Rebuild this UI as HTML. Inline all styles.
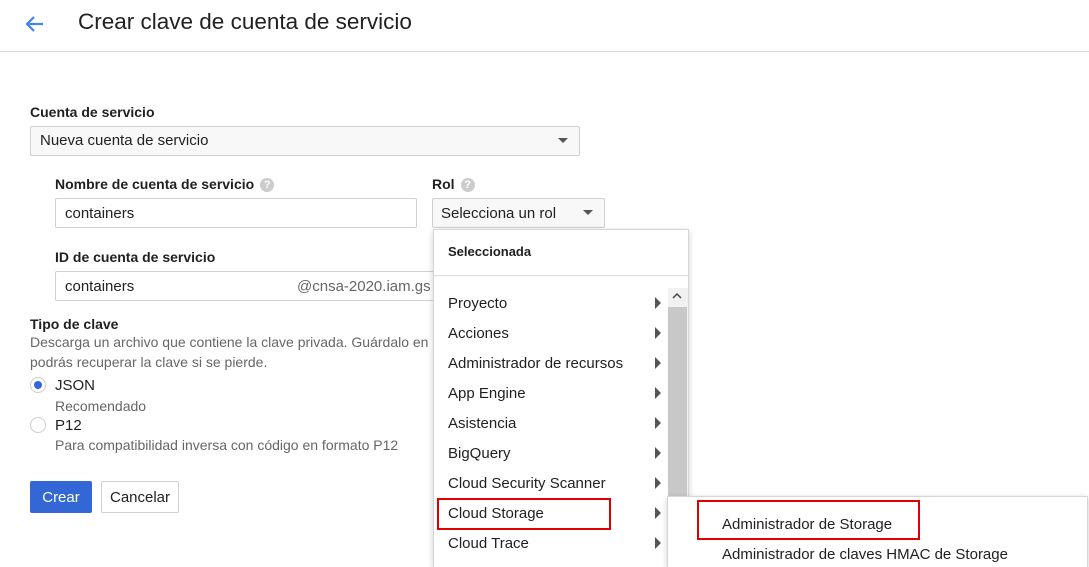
<!DOCTYPE html><html style="width:1089px;height:567px;overflow:hidden"><head><meta charset="utf-8"><style>
*{margin:0;padding:0;box-sizing:border-box}
body{width:1089px;height:567px;overflow:hidden;background:#fff;font-family:"Liberation Sans",Arial,sans-serif;color:#212121;position:relative}
.a{position:absolute;white-space:nowrap}
.lbl{font-size:14px;font-weight:bold;color:#212121}
.box{position:absolute;border:1px solid #d0d0d0;border-radius:2px;background:#fff}
.sel{background:#f8f8f8}
.tri{position:absolute;width:0;height:0;border-left:5px solid transparent;border-right:5px solid transparent;border-top:5px solid #555}
.q{display:inline-block;width:14px;height:14px;border-radius:50%;background:#ccc;color:#fff;font-size:11px;font-weight:bold;text-align:center;line-height:14px;vertical-align:1px;margin-left:6px}
.it{position:absolute;left:448px;font-size:15px;color:#212121}
.ar{position:absolute;left:655px;width:0;height:0;border-top:6px solid transparent;border-bottom:6px solid transparent;border-left:6px solid #555}
.g{color:#666;font-size:14px}
</style></head><body>
<svg class="a" style="left:23px;top:12px" width="24" height="24" viewBox="0 0 24 24"><path d="M20 12H5M11 5l-7 7 7 7" fill="none" stroke="#4285f4" stroke-width="2.2"/></svg>
<div class="a" style="left:78px;top:9px;font-size:22.5px;color:#212121">Crear clave de cuenta de servicio</div>
<div class="a" style="left:0;top:51px;width:1089px;height:1px;background:#dadada"></div>

<div class="a lbl" style="left:30px;top:104px">Cuenta de servicio</div>
<div class="box sel" style="left:30px;top:126px;width:550px;height:30px"></div>
<div class="a" style="left:40px;top:132px;font-size:15px">Nueva cuenta de servicio</div>
<div class="tri" style="left:558px;top:138px"></div>

<div class="a lbl" style="left:55px;top:176px">Nombre de cuenta de servicio<span class="q">?</span></div>
<div class="box" style="left:55px;top:198px;width:362px;height:30px"></div>
<div class="a" style="left:65px;top:205px;font-size:15px">containers</div>

<div class="a lbl" style="left:432px;top:176px">Rol<span class="q">?</span></div>
<div class="box sel" style="left:432px;top:198px;width:173px;height:30px"></div>
<div class="a" style="left:441px;top:205px;font-size:15px">Selecciona un rol</div>
<div class="tri" style="left:583px;top:210px"></div>

<div class="a lbl" style="left:55px;top:249px">ID de cuenta de servicio</div>
<div class="box" style="left:55px;top:271px;width:400px;height:30px"></div>
<div class="a" style="left:65px;top:278px;font-size:15px">containers</div>
<div class="a" style="left:297px;top:278px;font-size:15px;color:#666">@cnsa-2020.iam.gs</div>

<div class="a lbl" style="left:30px;top:316px">Tipo de clave</div>
<div class="a g" style="left:30px;top:334px">Descarga un archivo que contiene la clave privada. Guárdalo en un</div>
<div class="a g" style="left:30px;top:354px">podrás recuperar la clave si se pierde.</div>
<div class="a" style="left:30px;top:377px;width:16px;height:16px;border-radius:50%;border:1px solid #ccc;background:#fff"><div style="position:absolute;left:3px;top:3px;width:8px;height:8px;border-radius:50%;background:#3367d6"></div></div>
<div class="a" style="left:55px;top:377px;font-size:15px">JSON</div>
<div class="a g" style="left:55px;top:398px">Recomendado</div>
<div class="a" style="left:30px;top:417px;width:16px;height:16px;border-radius:50%;border:1px solid #ccc"></div>
<div class="a" style="left:55px;top:417px;font-size:15px">P12</div>
<div class="a g" style="left:55px;top:437px">Para compatibilidad inversa con código en formato P12</div>

<div class="a" style="left:30px;top:481px;width:62px;height:32px;background:#3367d6;border-radius:2px;color:#fff;font-size:15px;text-align:center;padding-top:8px">Crear</div>
<div class="a" style="left:101px;top:481px;width:78px;height:32px;border:1px solid #d0d0d0;border-radius:2px;font-size:15px;text-align:center;padding-top:7px">Cancelar</div>

<div class="a" style="left:433px;top:229px;width:256px;height:338px;background:#fff;border:1px solid #d6d6d6;border-bottom:none;box-shadow:0 2px 6px rgba(0,0,0,.2)"></div>
<div class="a" style="left:448px;top:244px;font-size:13px;font-weight:bold">Seleccionada</div>
<div class="a" style="left:434px;top:275px;width:254px;height:1px;background:#ddd"></div>
<div class="a" style="left:668px;top:288px;width:20px;height:279px;background:#f1f1f1"></div>
<div class="a" style="left:668px;top:307px;width:19px;height:190px;background:#c8c8c8"></div>
<svg class="a" style="left:671px;top:291px" width="12" height="10"><path d="M2 7l4-4 4 4" fill="none" stroke="#444" stroke-width="1.5"/></svg>
<div class="it" style="top:295px">Proyecto</div><div class="ar" style="top:297px"></div>
<div class="it" style="top:325px">Acciones</div><div class="ar" style="top:327px"></div>
<div class="it" style="top:355px">Administrador de recursos</div><div class="ar" style="top:357px"></div>
<div class="it" style="top:385px">App Engine</div><div class="ar" style="top:387px"></div>
<div class="it" style="top:415px">Asistencia</div><div class="ar" style="top:417px"></div>
<div class="it" style="top:445px">BigQuery</div><div class="ar" style="top:447px"></div>
<div class="it" style="top:475px">Cloud Security Scanner</div><div class="ar" style="top:477px"></div>
<div class="it" style="top:505px">Cloud Storage</div><div class="ar" style="top:507px"></div>
<div class="it" style="top:535px">Cloud Trace</div><div class="ar" style="top:537px"></div>
<div class="a" style="left:437px;top:498px;width:174px;height:32px;border:2px solid #e00000"></div>

<div class="a" style="left:667px;top:496px;width:421px;height:71px;background:#fff;border:1px solid #d6d6d6;border-bottom:none;box-shadow:0 2px 6px rgba(0,0,0,.2)"></div>
<div class="a" style="left:722px;top:516px;font-size:15px">Administrador de Storage</div>
<div class="a" style="left:722px;top:546px;font-size:15px">Administrador de claves HMAC de Storage</div>
<div class="a" style="left:697px;top:500px;width:223px;height:40px;border:2px solid #e00000"></div>
</body></html>
